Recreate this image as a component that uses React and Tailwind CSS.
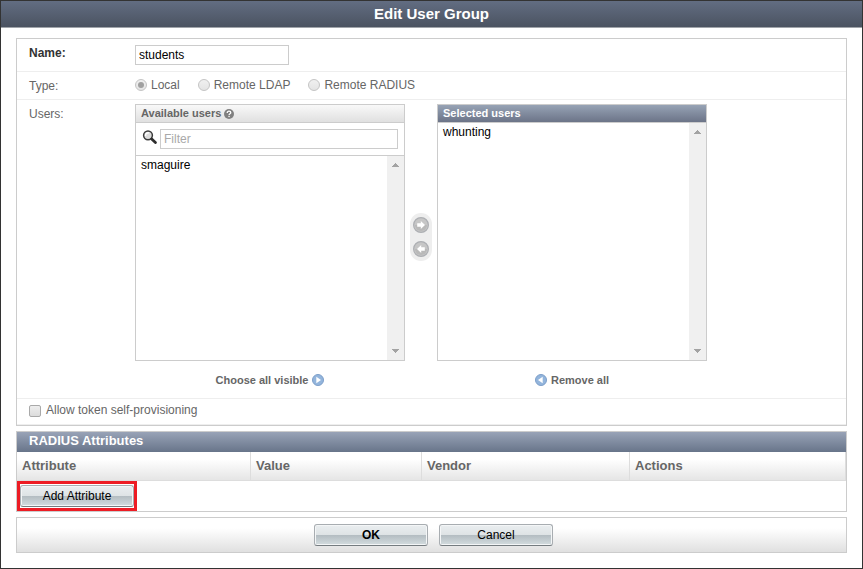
import { useState } from 'react'

const columns = ['Attribute', 'Value', 'Vendor', 'Actions']

function Row({ label, htmlFor, bold, className, children }) {
  return (
    <div className={`flex border-b border-[#eeeeee] pl-3 ${className}`}>
      <label htmlFor={htmlFor} className={`w-[106px] shrink-0 leading-4 ${bold ? 'font-bold text-[#333333]' : 'pt-[2px] text-[#666666]'}`}>
        {label}
      </label>
      {children}
    </div>
  )
}

function TypeOption({ label, checked }) {
  return (
    <label className="flex items-center gap-1 leading-4 text-[#666666]">
      <input
        type="radio"
        name="type"
        disabled
        defaultChecked={checked}
        className="peer grid size-3 appearance-none place-content-center rounded-full border border-[#c4c4c4] bg-linear-to-b from-[#f0f0f0] to-[#e4e4e4] before:size-[6px] before:rounded-full checked:before:bg-[#a0a0a0]"
      />
      {label}
    </label>
  )
}

function Scrollbar() {
  return (
    <div className="flex w-[17px] shrink-0 flex-col items-center justify-between bg-[#f0f0f0] py-[7px]" aria-hidden="true">
      <svg width="7" height="4" viewBox="0 0 7 4" shapeRendering="crispEdges">
        <path d="M3 0h1v1h1v1h1v1h1v1H0V3h1V2h1V1h1z" fill="#a3a3a3" />
      </svg>
      <svg width="7" height="4" viewBox="0 0 7 4" shapeRendering="crispEdges">
        <path d="M3 4h1V3h1V2h1V1h1V0H0v1h1v1h1v1h1z" fill="#a3a3a3" />
      </svg>
    </div>
  )
}

function UserList({ label, users }) {
  return (
    <div className="flex flex-1">
      <select multiple aria-label={label} className="min-w-0 flex-1 appearance-none overflow-hidden bg-white p-0 text-black outline-none">
        {users.map((u) => (
          <option key={u} className="min-h-0 px-[5px] pt-[2px] leading-4">{u}</option>
        ))}
      </select>
      <Scrollbar />
    </div>
  )
}

function HelpIcon() {
  return (
    <svg width="10" height="10" viewBox="0 0 10 10" aria-hidden="true">
      <circle cx="5" cy="5" r="5" fill="#808080" />
      <path d="M3.2 4c0-1.2.8-1.8 1.8-1.8s1.8.6 1.8 1.5c0 1.1-1.7 1.1-1.7 2.3" fill="none" stroke="#fff" strokeWidth="1.3" />
      <rect x="4.4" y="6.8" width="1.3" height="1.3" fill="#fff" />
    </svg>
  )
}

function SearchIcon() {
  return (
    <svg width="15" height="16" viewBox="0 0 15 16" aria-hidden="true">
      <circle cx="6" cy="6.3" r="4.4" fill="#dcdcdc" stroke="#3a3a3a" strokeWidth="1.5" />
      <path d="M3.5 7C3.5 4.8 4.7 3.8 6.9 3.8" fill="none" stroke="#fff" strokeWidth="1.4" />
      <path d="M9.7 10l3.7 3.5" stroke="#2e2e2e" strokeWidth="2.8" strokeLinecap="round" />
    </svg>
  )
}

function MoveIcon({ left }) {
  return (
    <svg width="16" height="16" viewBox="0 0 16 16" className={left ? '-scale-x-100' : ''} aria-hidden="true">
      <circle cx="8" cy="8" r="7.4" fill="#c6c6c6" stroke="#adafb3" strokeWidth="1.2" />
      <path d="M2 8a6 6 0 0 0 12 0z" fill="#b9b9b9" />
      <path d="M4.2 6.2h3.6V4L12 8l-4.2 4V9.8H4.2z" fill="#fff" />
    </svg>
  )
}

function BlueArrow({ left }) {
  return (
    <svg width="12" height="12" viewBox="0 0 12 12" className={left ? '-scale-x-100' : ''} aria-hidden="true">
      <circle cx="6" cy="6" r="5.5" fill="#93b5dc" stroke="#7d9fc9" strokeWidth="1" />
      <path d="M4.3 2.8v6.4L9 6z" fill="#fff" />
    </svg>
  )
}

function Button({ bold, children }) {
  return (
    <button
      type="button"
      className={`h-[22px] w-[114px] rounded-[3px] border border-[#a8adb1] border-b-[#757c80] bg-[#f4f6f7] text-black ${bold ? 'font-bold' : ''}`}
    >
      <span className="mx-px flex h-[18px] items-center justify-center bg-[linear-gradient(#e9edef_0%,#dee3e5_50%,#b3bcc1_50%,#d0d9dc_100%)] pb-px">
        {children}
      </span>
    </button>
  )
}

export default function App() {
  const [name, setName] = useState('students')
  const [filter, setFilter] = useState('')
  const available = ['smaguire'].filter((u) => u.includes(filter))

  return (
    <div className="min-h-screen border border-[#333333] bg-white font-['Liberation_Sans',Arial,sans-serif] text-[12px]">
      <header className="border-b border-[#a0a4aa] bg-linear-to-b from-[#626d82] to-[#4b5361]">
        <h1 className="py-[3px] text-center text-[15px] leading-5 font-bold text-white">Edit User Group</h1>
      </header>

      <form className="px-[15px] pt-[10px] pb-[15px]">
        <section className="border border-[#cccccc]">
          <Row label="Name:" htmlFor="name" bold className="pt-[6px] pb-[6px]">
            <input
              id="name"
              value={name}
              onChange={(e) => setName(e.target.value)}
              className="h-5 w-[154px] border border-[#cccccc] px-[3px] text-black outline-none"
            />
          </Row>

          <fieldset className="flex border-b border-[#eeeeee] pt-[5px] pb-[5px] pl-3 text-[#666666]">
            <legend className="float-left w-[106px] pt-px leading-4">Type:</legend>
            <div className="flex items-start gap-[18px]">
              <TypeOption label="Local" checked />
              <TypeOption label="Remote LDAP" />
              <TypeOption label="Remote RADIUS" />
            </div>
          </fieldset>

          <Row label="Users:" htmlFor="filter" className="pt-1 pb-[10px]">
            <div className="grid grid-cols-[270px_32px_270px]">
              <div className="flex h-[257px] flex-col border border-[#cccccc]">
                <h2 className="flex items-center gap-[3px] border-b border-[#cccccc] bg-linear-to-b from-[#f9f9f9] to-[#e0e0e0] px-[5px] text-[11px] leading-[17px] font-bold text-[#666666]">
                  Available users <HelpIcon />
                </h2>
                <div className="flex gap-[3px] border-b border-[#cccccc] py-[6px] pr-[6px] pl-[6px]">
                  <SearchIcon />
                  <input
                    id="filter"
                    placeholder="Filter"
                    value={filter}
                    onChange={(e) => setFilter(e.target.value)}
                    className="h-5 min-w-0 flex-1 border border-[#cccccc] px-[3px] text-black outline-none placeholder:text-[#a9a9a9]"
                  />
                </div>
                <UserList label="Available users" users={available} />
              </div>

              <div className="flex items-center justify-center">
                <div className="mt-2 flex w-[22px] flex-col items-center gap-2 rounded-full bg-[#eeeeee] py-1">
                  <button type="button" aria-label="Add user"><MoveIcon /></button>
                  <button type="button" aria-label="Remove user"><MoveIcon left /></button>
                </div>
              </div>

              <div className="flex h-[257px] flex-col border border-[#cccccc]">
                <h2 className="border-b border-[#cccccc] bg-linear-to-b from-[#97a3b5] to-[#6c7488] px-[5px] text-[11px] leading-[17px] font-bold text-white">
                  Selected users
                </h2>
                <UserList label="Selected users" users={['whunting']} />
              </div>

              <button type="button" className="col-start-1 mt-[11px] flex items-center justify-center gap-1 text-[11px] leading-4 font-bold text-[#666666]">
                Choose all visible <BlueArrow />
              </button>
              <button type="button" className="col-start-3 mt-[11px] flex items-center justify-center gap-1 text-[11px] leading-4 font-bold text-[#666666]">
                <BlueArrow left /> Remove all
              </button>
            </div>
          </Row>

          <div className="flex border-b border-[#eeeeee] pt-[3px] pb-[6px] pl-3">
            <label className="flex items-center gap-[5px] leading-4 text-[#666666]">
              <input type="checkbox" className="mt-[2px] size-3 appearance-none rounded-[2px] border border-[#a9a9a9] bg-linear-to-b from-[#eeeeee] to-[#dcdcdc] checked:bg-[#666666]" />
              Allow token self-provisioning
            </label>
          </div>
        </section>

        <section className="mt-[5px] border border-[#cccccc]">
          <h2 className="bg-linear-to-b from-[#99a3b7] to-[#68758a] pb-[2px] pl-3 text-[13px] leading-[18px] font-bold text-white">RADIUS Attributes</h2>
          <table className="w-full table-fixed border-separate border-spacing-0">
            <colgroup>
              <col className="w-[234px]" />
              <col className="w-[171px]" />
              <col className="w-[208px]" />
              <col />
            </colgroup>
            <thead>
              <tr className="bg-linear-to-b from-white from-25% to-[#e4e4e4]">
                {columns.map((c) => (
                  <th key={c} className="h-[29px] border-r border-b border-[#dddddd] px-[5px] pb-px text-left text-[13px] leading-4 font-bold text-[#666666]">{c}</th>
                ))}
              </tr>
            </thead>
            <tbody>
              <tr>
                <td colSpan={4} className="p-0">
                  <div className="flex h-[30px] w-[120px] items-center border-3 border-[#ed1c24]">
                    <Button>Add Attribute</Button>
                  </div>
                </td>
              </tr>
            </tbody>
          </table>
        </section>

        <footer className="mt-[5px] flex justify-center gap-[11px] border border-[#cccccc] bg-linear-to-b from-white from-30% to-[#e0e0e0] py-[6px] pl-1">
          <Button bold>OK</Button>
          <Button>Cancel</Button>
        </footer>
      </form>
    </div>
  )
}
